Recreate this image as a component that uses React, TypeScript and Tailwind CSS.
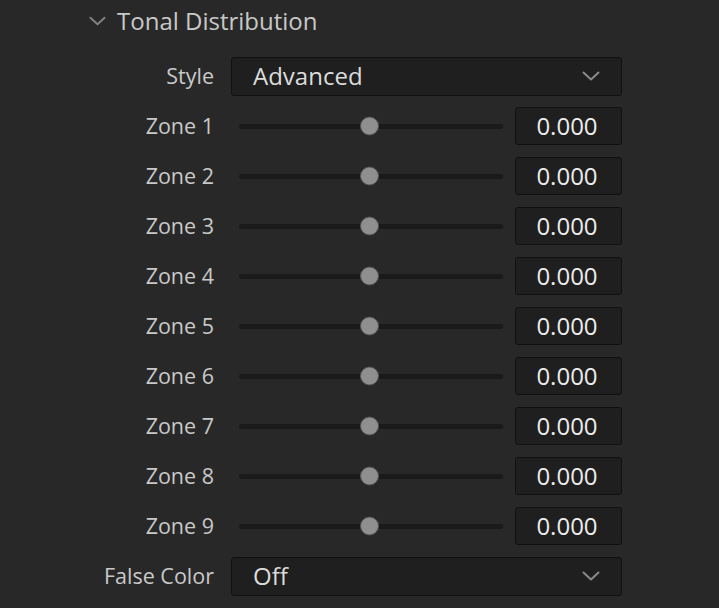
const zones = [1, 2, 3, 4, 5, 6, 7, 8, 9];

function Chevron({ className }: { className?: string }) {
  return (
    <svg viewBox="0 0 18 10" className={className} fill="none" stroke="currentColor" strokeWidth="2" strokeLinecap="round" strokeLinejoin="round">
      <path d="M1.5 1.5 L9 8.5 L16.5 1.5" />
    </svg>
  );
}

function Dropdown({ value }: { value: string }) {
  return (
    <div className="w-[391px] h-[39px] flex items-center justify-between pl-[21px] pr-[21px] bg-[#1f1f1f] border border-[#101010] rounded-[3px]">
      <span className="text-[24px] leading-none text-[#dcdcdc]">{value}</span>
      <Chevron className="w-[18px] h-[10px] text-[#8a8a8a]" />
    </div>
  );
}

function ZoneSlider() {
  return (
    <div className="flex items-center w-[391px]">
      <div className="relative w-[264px] ml-[8px] h-[5px] rounded-full bg-[#1a1a1a]">
        <div className="absolute left-[121px] top-1/2 -translate-y-1/2 w-[19px] h-[19px] rounded-full bg-[#8f8f8f] border border-[#555]" />
      </div>
      <div className="ml-auto w-[107px] h-[38px] flex items-center justify-center pr-[3px] bg-[#1f1f1f] border border-[#101010] rounded-[3px] text-[24px] leading-none text-[#ececec]">
        0.000
      </div>
    </div>
  );
}

function Row({ label, children }: { label: string; children: React.ReactNode }) {
  return (
    <div className="flex items-center h-[50px]">
      <div className="w-[214px] text-right text-[21.5px] leading-none text-[#c9c9c9]">{label}</div>
      <div className="ml-[17px]">{children}</div>
    </div>
  );
}

export default function App() {
  return (
    <div className="w-[719px] h-[608px] bg-[#282828] overflow-hidden" style={{ fontFamily: '"Open Sans", "Noto Sans", sans-serif' }}>
      <div className="flex items-center h-[42px] pl-[89px] gap-[11px]">
        <Chevron className="w-[17px] h-[10px] text-[#828282]" />
        <span className="text-[24px] leading-none text-[#c8c8c8]">Tonal Distribution</span>
      </div>
      <div className="mt-[9px]">
        <Row label="Style">
          <Dropdown value="Advanced" />
        </Row>
        {zones.map((z) => (
          <Row key={z} label={`Zone ${z}`}>
            <ZoneSlider />
          </Row>
        ))}
        <Row label="False Color">
          <Dropdown value="Off" />
        </Row>
      </div>
    </div>
  );
}
